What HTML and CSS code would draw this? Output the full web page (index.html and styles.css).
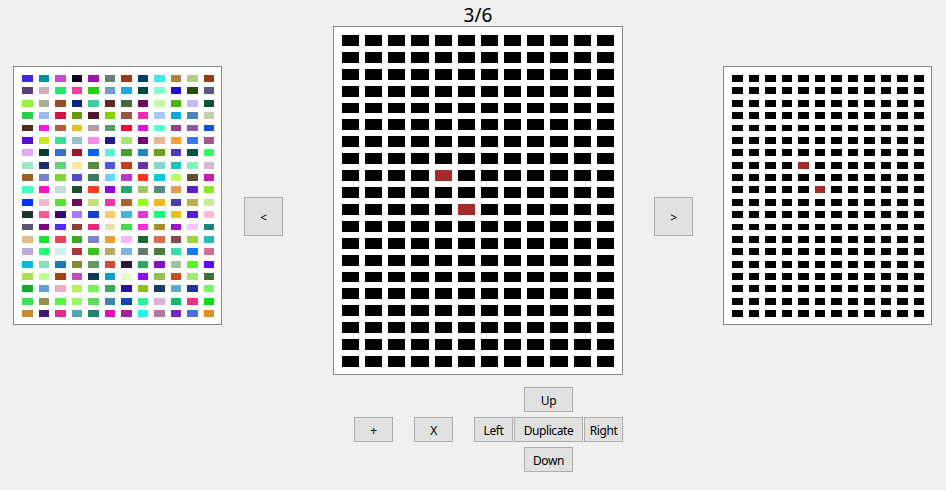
FILE: index.html
```html
<!DOCTYPE html>
<html>
<head>
<meta charset="utf-8">
<title>Frames</title>
<link rel="stylesheet" href="styles.css">
</head>
<body>
<div class="app">
  <div class="stage">
    <div class="frame frame-side" id="prev-frame"></div>
    <button class="btn nav nav-prev">&lt;</button>
    <div class="current">
      <div class="counter">3/6</div>
      <div class="frame frame-main" id="cur-frame"></div>
    </div>
    <button class="btn nav nav-next">&gt;</button>
    <div class="frame frame-side frame-next" id="next-frame"></div>
  </div>
  <div class="controls">
    <button class="btn small">+</button>
    <button class="btn small">X</button>
    <div class="dpad">
      <button class="btn up">Up</button>
      <button class="btn left">Left</button>
      <button class="btn dup">Duplicate</button>
      <button class="btn right">Right</button>
      <button class="btn down">Down</button>
    </div>
  </div>
</div>
<script src="script.js"></script>
</body>
</html>
```

FILE: styles.css
```css
html, body {
  margin: 0;
  padding: 0;
}
body {
  background: #f0f0f0;
  font-family: "Noto Sans", "Open Sans", sans-serif;
  color: #000;
  width: 946px;
  height: 490px;
  overflow: hidden;
}
.stage {
  display: flex;
  align-items: flex-start;
  padding-left: 13px;
}
.frame {
  box-sizing: border-box;
  background: #fff;
  border: 1px solid #828790;
  display: grid;
  grid-template-columns: repeat(12, 1fr);
  grid-template-rows: repeat(20, 1fr);
}
.frame-side {
  width: 209px;
  height: 259px;
  margin-top: 66px;
  padding: 8px 7px 7px 8px;
  column-gap: 6px;
  row-gap: 5.5px;
}
.frame-main {
  width: 290px;
  height: 349px;
  padding: 8px 8px 7px 8px;
  column-gap: 6px;
  row-gap: 6px;
}
.frame-next {
  margin-left: 30px;
}
.cell {
  background: #000;
}
.cell.sel {
  background: #a52a2a;
}
.btn {
  box-sizing: border-box;
  margin: 0;
  padding: 2px 0 0 0;
  background: #e1e1e1;
  border: 1px solid #adadad;
  border-radius: 0;
  font-family: "Noto Sans", "Open Sans", sans-serif;
  font-size: 12px;
  letter-spacing: -0.4px;
  color: #000;
}
.nav {
  width: 39px;
  height: 39px;
  margin-top: 197px;
}
.nav-prev {
  margin-left: 22px;
}
.nav-next {
  margin-left: 31px;
}
.current {
  width: 290px;
  margin-left: 50px;
}
.counter {
  height: 26px;
  line-height: 30px;
  font-size: 19px;
  text-align: center;
}
.controls {
  display: flex;
  align-items: center;
  gap: 21px;
  margin-left: 354px;
  margin-top: 12px;
}
.small {
  width: 39px;
  height: 25px;
}
.dpad {
  display: grid;
  grid-template-columns: 39px 69px 39px;
  grid-template-rows: 25px 25px 25px;
  column-gap: 1px;
  row-gap: 5px;
}
.dpad .btn {
  height: 25px;
}
.up {
  grid-column: 2;
  grid-row: 1;
  width: 49px;
  justify-self: center;
}
.left {
  grid-column: 1;
  grid-row: 2;
}
.dup {
  grid-column: 2;
  grid-row: 2;
}
.right {
  grid-column: 3;
  grid-row: 2;
}
.down {
  grid-column: 2;
  grid-row: 3;
  width: 49px;
  justify-self: center;
}
```

FILE: script.js
```js
var LEFT = [
"#3f28e0","#0090a8","#c84cc8","#100020","#9c14a8","#687c78","#983818","#003c64","#40e8e8","#b08040","#b4cc88","#983c14",
"#5c3c78","#d0b0b4","#24e868","#f0409c","#28d010","#6c9cc8","#20a8e8","#004840","#88ffd0","#2410d0","#245000","#585888",
"#98f438","#a8ac90","#944c30","#0c2484","#40cc9c","#602824","#44683c","#6c0c58","#c4f8a4","#48b808","#c4b8f0","#0c5434",
"#2cd048","#9cb8f4","#d41444","#6c9810","#4c1828","#88d000","#985440","#f828b0","#acc8f8","#08acd4","#4c84b8","#c4d0ac",
"#4c2c1c","#f418e4","#b0603c","#ecc028","#b09ca4","#5c9c6c","#ff003c","#e010e4","#54ffd0","#984088","#8c5c9c","#1454d4",
"#5010c4","#c8e818","#34e490","#98c0c8","#f48ce8","#24188c","#a0e870","#780074","#e8b890","#fc9c38","#3478f4","#a45888",
"#e4a8f4","#003c30","#3470d4","#a41424","#0064f0","#58f0dc","#48a028","#1c88cc","#6c9c20","#4c38c4","#00504c","#34ff68",
"#9ce8c4","#1c2c6c","#58d87c","#ffe89c","#588c40","#5454e4","#c83c1c","#6034ac","#84d8cc","#18c4c0","#7cf8b4","#d8b8d4",
"#a05c28","#7c80d4","#78dc30","#4c48d8","#3c7c5c","#64d8f8","#b43cd4","#f83420","#10c4e8","#c4f860","#605030","#c81cb0",
"#40ffc8","#ff10c8","#c4dcd8","#20502c","#ff3c20","#9000e0","#24a86c","#98c860","#548c84","#e89850","#6020c4","#8ce820",
"#0434f4","#f8b8cc","#58e034","#6c0c54","#c4e07c","#ec38a0","#b06028","#90ff14","#f0b824","#483cac","#b8b050","#c8e8a0",
"#20302c","#fc5c8c","#340c70","#a87cf4","#1c3cd8","#f8cc68","#48b4d4","#dc3cd8","#14ff7c","#e4c410","#4c24d8","#f8bcd8",
"#5c5478","#7c087c","#5428f8","#8c4034","#e82874","#e8e0b0","#40dc4c","#ec30e0","#a09030","#a014c8","#fcc4fc","#1c8478",
"#e0bc8c","#18e430","#f43c5c","#3ca820","#7c84cc","#f09c34","#f4b8f0","#1c6830","#d07050","#884850","#9cd444","#30b8b8",
"#c0a8dc","#20ff6c","#ccf0f0","#a83c3c","#38c420","#b8a860","#7cb4e0","#647c6c","#4c7c3c","#34e0a8","#0c7cfc","#cc7098",
"#0cb4e4","#88e0c4","#1c78b4","#888830","#5c9c64","#d04c34","#341434","#28ac5c","#8410c4","#9cc4a0","#58f81c","#6008f4",
"#a8e050","#c0ff8c","#a8400c","#c050b8","#0c3858","#08a0c8","#e0ffc8","#9008f0","#98c058","#c84c18","#a0ec6c","#446c38",
"#10ac2c","#64a0d8","#ecaccc","#b8f058","#78f060","#38ac5c","#2810a0","#90bc20","#1c3c64","#60a8c4","#1c34a0","#78f860",
"#38e454","#949048","#58f83c","#98f868","#5cdc5c","#3888b0","#1048b4","#24f894","#d8b0d8","#0cbc70","#fc2c84","#08e010",
"#c88c2c","#3c1874","#e8288c","#58a4b4","#248070","#e410b4","#a820a0","#24f4e4","#b078a0","#7028c0","#4c6cd8","#e09020"
];

function fill(el, colorAt, selected) {
  for (var r = 0; r < 20; r++) {
    for (var c = 0; c < 12; c++) {
      var d = document.createElement("div");
      d.className = "cell";
      if (colorAt) {
        d.style.background = colorAt(r, c);
      } else if (selected && selected.some(function (p) { return p[0] === r && p[1] === c; })) {
        d.className = "cell sel";
      }
      el.appendChild(d);
    }
  }
}

fill(document.getElementById("prev-frame"), function (r, c) { return LEFT[r * 12 + c]; });
fill(document.getElementById("cur-frame"), null, [[8, 4], [10, 5]]);
fill(document.getElementById("next-frame"), null, [[7, 4], [9, 5]]);
```
